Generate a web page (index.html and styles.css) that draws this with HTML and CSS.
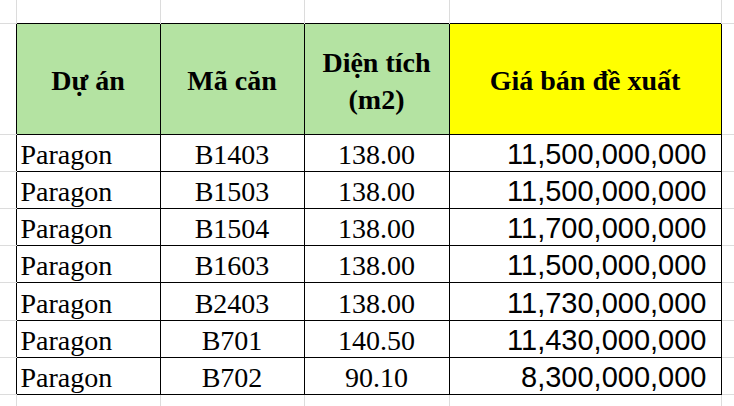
FILE: index.html
```html
<!DOCTYPE html>
<html lang="vi">
<head>
<meta charset="utf-8">
<title>Bảng giá Paragon</title>
<link rel="stylesheet" href="styles.css">
</head>
<body>
<table class="sheet">
  <colgroup>
    <col class="c0"><col class="c1"><col class="c2"><col class="c3"><col class="c4"><col class="c5">
  </colgroup>
  <tr class="r-top">
    <td class="g-corner"></td><td class="g-top"></td><td class="g-top"></td><td class="g-top"></td><td class="g-top"></td><td class="g-tr"></td>
  </tr>
  <tr class="r-head">
    <td class="g-left"></td>
    <th class="t head green">Dự án</th>
    <th class="t head green">Mã căn</th>
    <th class="t head green two">Diện tích<br>(m2)</th>
    <th class="t head yellow">Giá bán đề xuất</th>
    <td class="g-right"></td>
  </tr>
  <tr class="r-data">
    <td class="g-left"></td><td class="t name">Paragon</td><td class="t mid">B1403</td><td class="t mid">138.00</td><td class="t num">11,500,000,000</td><td class="g-right"></td>
  </tr>
  <tr class="r-data">
    <td class="g-left"></td><td class="t name">Paragon</td><td class="t mid">B1503</td><td class="t mid">138.00</td><td class="t num">11,500,000,000</td><td class="g-right"></td>
  </tr>
  <tr class="r-data">
    <td class="g-left"></td><td class="t name">Paragon</td><td class="t mid">B1504</td><td class="t mid">138.00</td><td class="t num">11,700,000,000</td><td class="g-right"></td>
  </tr>
  <tr class="r-data">
    <td class="g-left"></td><td class="t name">Paragon</td><td class="t mid">B1603</td><td class="t mid">138.00</td><td class="t num">11,500,000,000</td><td class="g-right"></td>
  </tr>
  <tr class="r-data r-tall">
    <td class="g-left"></td><td class="t name">Paragon</td><td class="t mid">B2403</td><td class="t mid">138.00</td><td class="t num">11,730,000,000</td><td class="g-right"></td>
  </tr>
  <tr class="r-data">
    <td class="g-left"></td><td class="t name">Paragon</td><td class="t mid">B701</td><td class="t mid">140.50</td><td class="t num">11,430,000,000</td><td class="g-right"></td>
  </tr>
  <tr class="r-data">
    <td class="g-left"></td><td class="t name">Paragon</td><td class="t mid">B702</td><td class="t mid">90.10</td><td class="t num">8,300,000,000</td><td class="g-right"></td>
  </tr>
  <tr class="r-bot">
    <td class="g-bot"></td><td class="g-bot"></td><td class="g-bot"></td><td class="g-bot"></td><td class="g-bot"></td><td></td>
  </tr>
</table>
</body>
</html>
```
FILE: styles.css
```css
html, body {
  margin: 0;
  padding: 0;
  background: #ffffff;
}

.sheet {
  border-collapse: collapse;
  table-layout: fixed;
  width: 734px;
  color: #000000;
}

.c0 { width: 16px; }
.c1 { width: 144px; }
.c2 { width: 144px; }
.c3 { width: 145px; }
.c4 { width: 272px; }
.c5 { width: 13px; }

.sheet td, .sheet th {
  padding: 0;
  border: none;
}

.r-top { height: 23px; }
.r-head { height: 111px; }
.r-data { height: 37px; }
.r-tall { height: 38px; }
.r-bot { height: 12px; }

/* spreadsheet gridlines outside the table */
.sheet .g-corner { border-right: 1px solid #dcdcdc; border-bottom: 1px solid #dcdcdc; }
.sheet .g-top { border-right: 1px solid #dcdcdc; }
.sheet .g-tr { border-bottom: 1px solid #dcdcdc; }
.sheet .g-left { border-bottom: 1px solid #dcdcdc; }
.sheet .g-right { border-bottom: 1px solid #dcdcdc; }
.sheet .g-bot { border-right: 1px solid #dcdcdc; }

/* the bordered table */
.sheet .t {
  border: 1px solid #000000;
}

.head {
  font-family: "Liberation Serif", "Times New Roman", serif;
  font-weight: bold;
  font-size: 28px;
  line-height: 37px;
  text-align: center;
  vertical-align: middle;
}

.sheet .head {
  padding-top: 4px;
}

.green { background: #b4e3a2; }
.yellow { background: #ffff00; }

.name, .mid {
  font-family: "Liberation Serif", "Times New Roman", serif;
  font-size: 28px;
  line-height: 31px;
  vertical-align: bottom;
}

.sheet .name {
  text-align: left;
  padding: 0 0 1px 4px;
}

.sheet .mid {
  text-align: center;
  padding: 0 0 1px 0;
}

.sheet .num {
  font-family: "Liberation Sans", Arial, sans-serif;
  font-size: 29px;
  line-height: 32px;
  text-align: right;
  vertical-align: bottom;
  padding: 0 14px 1px 0;
}
```
